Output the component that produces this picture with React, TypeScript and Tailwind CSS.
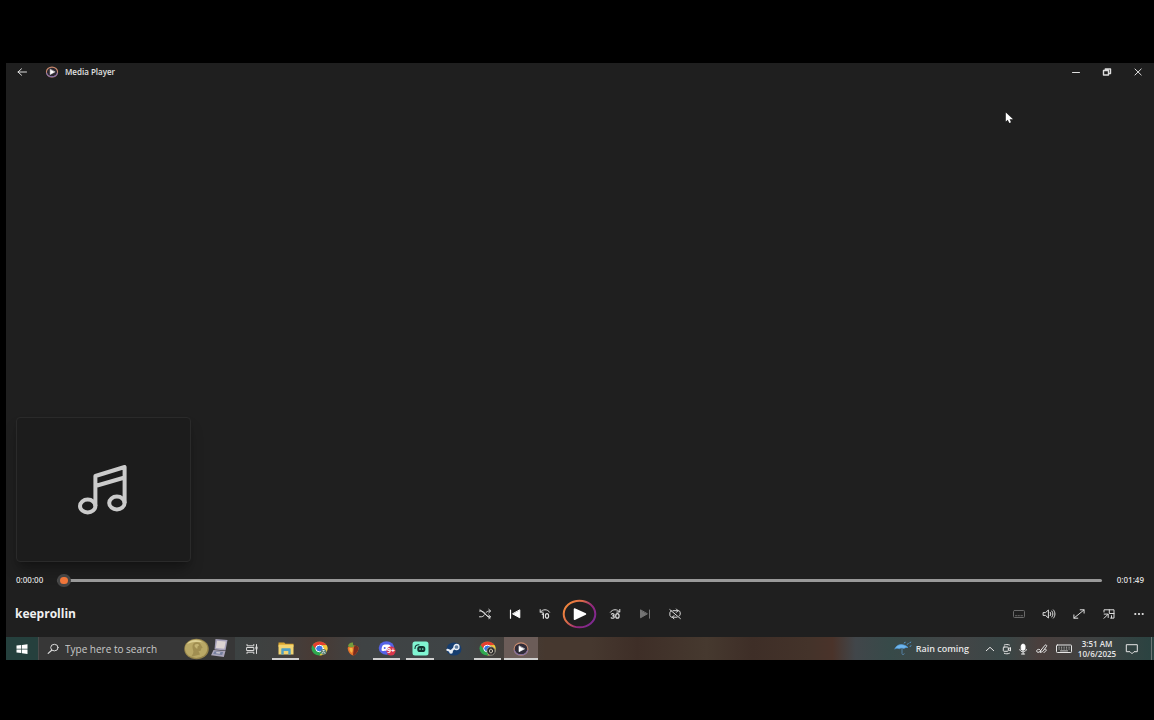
import { useState } from "react"
import type { ReactNode } from "react"

interface IconProps {
  w: number
  h: number
  className?: string
  children: ReactNode
}

function Icon({ w, h, className, children }: IconProps) {
  return (
    <svg
      width={w}
      height={h}
      viewBox={`0 0 ${w} ${h}`}
      fill="none"
      stroke="currentColor"
      strokeWidth="1"
      strokeLinecap="round"
      strokeLinejoin="round"
      className={className}
      aria-hidden="true"
    >
      {children}
    </svg>
  )
}

function PlayerLogo({ className }: { className?: string }) {
  return (
    <Icon w={14} h={12} className={className}>
      <ellipse cx="7" cy="6" rx="5.6" ry="4.9" fill="#2b2731" stroke="#c98a6c" strokeWidth="1.1" />
      <path d="M1.6 7.2A5.6 4.9 0 0 0 12.4 7.2" stroke="#7f6cab" strokeWidth="1.1" />
      <path d="M5.2 3.5v5l4.6-2.5z" fill="#fff" stroke="#fff" strokeWidth="0.5" />
    </Icon>
  )
}

function ChromeLogo() {
  return (
    <>
      <ellipse cx="8.5" cy="7.5" rx="8" ry="7" fill="#2fa84f" stroke="none" />
      <path d="M1.6 4A8 7 0 0 1 15.5 4L8.5 4.4 5 8.8z" fill="#e5402f" stroke="none" />
      <path d="M15.5 4A8 7 0 0 1 8.5 14.5L12 9.2 11 4.2z" fill="#f8c63a" stroke="none" />
      <ellipse cx="8.5" cy="7.5" rx="3.8" ry="3.3" fill="#3978e6" stroke="#fff" strokeWidth="1" />
    </>
  )
}

const transportLeft = [
  {
    label: "Shuffle",
    icon: (
      <Icon w={14} h={12}>
        <path d="M1.5 3h1.8c3.6 0 4.4 5.8 8 5.8h1M1.5 8.8h1.8c1.4 0 2.4-.9 3.2-2M8 4.6C9 3.7 9.8 3 11.2 3h1M10.8 1.3 12.6 3l-1.8 1.7M10.8 7.1l1.8 1.7-1.8 1.7M2 1.8l10 8.6" />
      </Icon>
    ),
  },
  {
    label: "Previous",
    icon: (
      <Icon w={14} h={12}>
        <path d="M2.5 2v8.2" stroke="#fff" strokeWidth="1.2" />
        <path d="M11.8 2.2v7.6L4.9 6z" fill="#fff" stroke="#fff" />
      </Icon>
    ),
  },
  {
    label: "Skip back 10 seconds",
    icon: (
      <Icon w={14} h={12}>
        <path d="M2.2 1.6v2.6h3M2.5 4C4.5 1 9.5.8 11.6 4.2" />
        <path d="M4.2 6.3l1.2-.7v4.6" strokeWidth="1.2" />
        <ellipse cx="9" cy="7.9" rx="1.6" ry="2.2" strokeWidth="1.2" />
      </Icon>
    ),
  },
]

const transportRight = [
  {
    label: "Skip forward 30 seconds",
    icon: (
      <Icon w={14} h={12}>
        <path d="M11.8 1.4V4h-3M11.5 3.8C9.5 1 4.5.8 2.4 4.2" />
        <path d="M3.4 6.1c1-.8 2.7-.4 2.7.7 0 .8-.8 1-1.4 1 .8 0 1.6.3 1.6 1.2 0 1.3-2 1.6-3.1.8" strokeWidth="1.2" />
        <ellipse cx="9.4" cy="7.9" rx="1.7" ry="2.3" strokeWidth="1.2" />
      </Icon>
    ),
  },
  {
    label: "Next",
    icon: (
      <Icon w={14} h={12} className="text-[#747474]">
        <path d="M11.5 2v8.2" />
        <path d="M2.5 2.2v7.6L9.1 6z" fill="currentColor" />
      </Icon>
    ),
  },
  {
    label: "Repeat off",
    icon: (
      <Icon w={14} h={12}>
        <path d="M5 2.7h5.2c1.3 0 2 .9 2 2V6c0 1-.4 1.7-1.1 2M9 9.2H4.4c-1.5 0-2.5-.8-2.5-2V5c0-1 .5-1.8 1.4-2.1M8.4 1 10 2.7 8.4 4.4M6 7.5 4.3 9.2 6 10.9M1.8 1.6l10.6 9" />
      </Icon>
    ),
  },
]

const viewControls = [
  {
    label: "Subtitles",
    icon: (
      <Icon w={14} h={12} className="text-[#6a6a6a]">
        <rect x="1.5" y="2.5" width="11" height="7" rx="1" />
        <path d="M3.5 7.7h1.6M6.4 7.7h1M8.9 7.7h1.6" />
      </Icon>
    ),
  },
  {
    label: "Volume",
    icon: (
      <Icon w={14} h={12}>
        <path d="M1.5 4.6h2L6.4 2v8L3.5 7.4h-2zM8.2 4.3c.8 1 .8 2.4 0 3.4M9.8 3c1.5 1.8 1.5 4.2 0 6M11.4 1.9c2.1 2.3 2.1 5.9 0 8.2" />
      </Icon>
    ),
  },
  {
    label: "Full screen",
    icon: (
      <Icon w={14} h={12}>
        <path d="M8.2 1.8h3.9v3.3M12 1.9 2 10.1M1.9 6.9v3.3h3.9" />
      </Icon>
    ),
  },
  {
    label: "Mini player",
    icon: (
      <Icon w={14} h={12}>
        <path d="M2 4V1.8h10v8.3H8.6M7.3 1.8v3.7H12M2.2 6.1h4v3.4M6 6.3l-4 4M9.5 7.7v2.2" />
      </Icon>
    ),
  },
  {
    label: "More options",
    icon: (
      <Icon w={14} h={12}>
        <g fill="#e8e8e8" stroke="none">
          <circle cx="3.3" cy="6" r="1.1" />
          <circle cx="7" cy="6" r="1.1" />
          <circle cx="10.7" cy="6" r="1.1" />
        </g>
      </Icon>
    ),
  },
]

const taskbarApps = [
  {
    label: "Task View",
    open: false,
    active: false,
    icon: (
      <Icon w={14} h={12}>
        <path d="M2 1.5v1.3h6.8V1.5M2 10.5V9.2h6.8v1.3M2 4.5h6.8v3H2zM11.5 1.5v9" />
        <path d="M11.5 4.2v1.6" strokeWidth="2" />
      </Icon>
    ),
  },
  {
    label: "File Explorer",
    open: true,
    active: false,
    icon: (
      <Icon w={16} h={13}>
        <g stroke="none">
          <path d="M.5.5h5.7l1.2 1.2h8.1V5H.5z" fill="#d9a52f" />
          <path d="M.5 2.7h15v9.8H.5z" fill="#f3d572" />
          <path d="M3.300 7.200c0-.6.4-1 1-1h7.400c.6 0 1 .4 1 1v5.300h-2.400V9H5.700v3.500H3.300z" fill="#4f9fc4" />
        </g>
      </Icon>
    ),
  },
  {
    label: "Google Chrome",
    open: false,
    active: false,
    icon: (
      <Icon w={17} h={15}>
        <ChromeLogo />
        <circle cx="12.5" cy="10.8" r="2.9" fill="#5d7f73" stroke="none" />
        <path d="M11 12.3c.7-2 2.6-2 3 0M12 9.5h1.2" stroke="#d8e5df" />
      </Icon>
    ),
  },
  {
    label: "FL Studio",
    open: false,
    active: false,
    icon: (
      <Icon w={12} h={14}>
        <g stroke="none">
          <path d="M.8 5.5C2 3 9.500 2.600 11.300 5c1 3-2.300 8-5.300 8.600C3 12.600.3 8.700.8 5.500z" fill="#e9752b" />
          <path d="M7 3.800c2.400-.3 4 .4 4.400 1.700.4 3-2.400 7.300-5.400 8.100z" fill="#7a2c1f" />
          <path d="M2.300 6.300c1-.9 2.800-.8 3.300.2.300 2-.3 4-1 4.300-1.300-.9-2.300-2.800-2.300-4.500z" fill="#f8b445" />
          <path d="M1 4.300C1.200 2 3.500.3 6 .6c0 1.700 0 2.900 1.800 4C5.300 5.600 3 5.700 1 4.300z" fill="#739c3c" />
        </g>
      </Icon>
    ),
  },
  {
    label: "Discord",
    open: true,
    active: false,
    icon: (
      <Icon w={18} h={15}>
        <ellipse cx="8.5" cy="7" rx="7.8" ry="6.7" fill="#5563e8" stroke="none" />
        <path d="M3.600 9.600C3.400 7 4.100 4.700 5.300 3.900c1.800-.5 4.600-.5 6.400 0 1.100.8 1.800 3.100 1.600 5.700-1.200.6-2 .7-2.400.2H6.400c-.4.5-1.600.4-2.800-.2z" fill="#fff" stroke="none" />
        <ellipse cx="6.7" cy="7" rx="1" ry="1.1" fill="#5563e8" stroke="none" />
        <circle cx="13" cy="10" r="4.500" fill="#d8364b" stroke="none" />
        <text x="13" y="12.4" textAnchor="middle" fill="#fff" stroke="none" fontSize="7" fontWeight="700">
          9+
        </text>
      </Icon>
    ),
  },
  {
    label: "Streamlabs",
    open: true,
    active: false,
    icon: (
      <Icon w={17} h={15}>
        <rect x="0.5" y="0.5" width="16" height="14" rx="2.5" fill="#80f5d2" stroke="none" />
        <rect x="5.3" y="5" width="8" height="6" rx="2.6" fill="#12332f" stroke="none" />
        <path d="M3 7.5C3 5 4.4 3.7 7 3.7" stroke="#12332f" strokeWidth="1.1" />
        <path d="M8 7.6v1M10.8 7.6v1" stroke="#80f5d2" />
      </Icon>
    ),
  },
  {
    label: "Steam",
    open: false,
    active: false,
    icon: (
      <Icon w={16} h={14}>
        <ellipse cx="8" cy="7" rx="7.5" ry="6.6" fill="#173e70" stroke="none" />
        <path d="M1.4 7.800 5 9.300l3.600-3.500" stroke="#e9eef5" strokeWidth="2.2" />
        <circle cx="5" cy="9.8" r="1.9" fill="#e9eef5" stroke="none" />
        <circle cx="10.5" cy="5" r="2.5" fill="#5f7d9f" stroke="#e9eef5" strokeWidth="1.3" />
      </Icon>
    ),
  },
  {
    label: "Google Chrome profile",
    open: true,
    active: false,
    icon: (
      <Icon w={17} h={15}>
        <ChromeLogo />
        <circle cx="12" cy="10" r="4.2" fill="#262626" stroke="#aaa59c" strokeWidth="0.8" />
        <ellipse cx="12" cy="10" rx="1.5" ry="2" stroke="#ddd4c5" strokeWidth="0.9" />
      </Icon>
    ),
  },
  {
    label: "Media Player",
    open: true,
    active: true,
    icon: (
      <Icon w={16} h={14}>
        <ellipse cx="8" cy="7" rx="6.9" ry="6.1" fill="#2f2b38" stroke="#c88b6e" strokeWidth="1.1" />
        <path d="M1.4 8.500a6.900 6.100 0 0 0 13.200 0" stroke="#8270a0" strokeWidth="1.1" />
        <path d="M6 4.200v5.600L11.300 7z" fill="#fff" stroke="#fff" strokeWidth="0.6" />
      </Icon>
    ),
  },
]

function ControlButton({ label, children }: { label: string; children: ReactNode }) {
  return (
    <button type="button" aria-label={label} className="flex h-7 w-[30px] items-center justify-center rounded hover:bg-white/10">
      {children}
    </button>
  )
}

function TitleBar() {
  return (
    <header className="flex h-[18px] items-center">
      <button type="button" aria-label="Back" className="flex h-full w-8 items-center justify-center hover:bg-white/10">
        <Icon w={12} h={10}>
          <path d="M2 5h8.5M5.5 1.8 2 5l3.5 3.2" />
        </Icon>
      </button>
      <PlayerLogo className="ml-[7px]" />
      <h1 className="ml-1.5 flex-1 text-[8px] leading-3 font-semibold text-[#e2e2e2]">Media Player</h1>
      <div className="flex h-full">
        <button type="button" aria-label="Minimize" className="flex w-[31px] items-center justify-center hover:bg-white/10">
          <Icon w={12} h={10}>
            <path d="M2.5 5.5h7" />
          </Icon>
        </button>
        <button type="button" aria-label="Restore" className="flex w-[31px] items-center justify-center hover:bg-white/10">
          <Icon w={12} h={10}>
            <path d="M2.5 3.5h5v4.500h-5zM4.300 3.300V2h5.200v4.500H7.800" strokeWidth="1.4" />
          </Icon>
        </button>
        <button type="button" aria-label="Close" className="flex w-8 items-center justify-center hover:bg-white/10">
          <Icon w={12} h={10}>
            <path d="M3 2l6.200 6M9.200 2 3 8" />
          </Icon>
        </button>
      </div>
    </header>
  )
}

function SeekBar() {
  const [position, setPosition] = useState(0)

  return (
    <div className="flex h-5 items-center px-2.5 text-[8px] leading-3 font-semibold text-[#dedede]">
      <span className="w-[41px]">0:00:00</span>
      <input
        type="range"
        aria-label="Seek"
        min={0}
        max={109}
        value={position}
        onChange={(e) => setPosition(Number(e.target.value))}
        className="h-3 min-w-0 flex-1 appearance-none bg-transparent [&::-webkit-slider-runnable-track]:h-[3px] [&::-webkit-slider-runnable-track]:rounded-full [&::-webkit-slider-runnable-track]:bg-[#999999] [&::-webkit-slider-thumb]:-mt-[5px] [&::-webkit-slider-thumb]:h-[13px] [&::-webkit-slider-thumb]:w-3.5 [&::-webkit-slider-thumb]:appearance-none [&::-webkit-slider-thumb]:rounded-full [&::-webkit-slider-thumb]:border-3 [&::-webkit-slider-thumb]:border-[#454545] [&::-webkit-slider-thumb]:bg-[#f0763a]"
      />
      <span className="w-[42px] text-right">0:01:49</span>
    </div>
  )
}

function Controls() {
  return (
    <div className="mt-[7px] mb-1.5 grid h-[34px] grid-cols-[1fr_auto_1fr] items-center text-[#dedede]">
      <h2 className="pl-[9px] text-xs font-bold text-[#f0f0f0]">keeprollin</h2>
      <div className="flex items-center">
        {transportLeft.map((c) => (
          <ControlButton key={c.label} label={c.label}>{c.icon}</ControlButton>
        ))}
        <button type="button" aria-label="Play" className="flex w-10 items-center justify-center">
          <svg width="36" height="30" viewBox="0 0 36 30" fill="none" aria-hidden="true">
            <defs>
              <linearGradient id="ring" x1="0" y1="0.2" x2="1" y2="0.8">
                <stop offset="0" stopColor="#f38a3c" />
                <stop offset="0.35" stopColor="#dc6a48" />
                <stop offset="0.65" stopColor="#93277e" />
                <stop offset="1" stopColor="#7b2a94" />
              </linearGradient>
            </defs>
            <ellipse cx="17.5" cy="15" rx="15.8" ry="13.3" stroke="url(#ring)" strokeWidth="2" />
            <path d="M12.5 10v10.200L23.5 15z" fill="#fff" stroke="#fff" strokeWidth="1.5" strokeLinejoin="round" />
          </svg>
        </button>
        {transportRight.map((c) => (
          <ControlButton key={c.label} label={c.label}>{c.icon}</ControlButton>
        ))}
      </div>
      <div className="flex justify-end">
        {viewControls.map((c) => (
          <ControlButton key={c.label} label={c.label}>{c.icon}</ControlButton>
        ))}
      </div>
    </div>
  )
}

function SearchBox() {
  return (
    <label className="flex w-[197px] items-center border-l border-[#4b4b4b] bg-[#373737] pl-2">
      <Icon w={12} h={12} className="shrink-0 text-[#dcdcdc]">
        <ellipse cx="7.4" cy="4.6" rx="3.7" ry="3.3" />
        <path d="M4.7 7.2 1.2 10.4" strokeWidth="1.2" />
      </Icon>
      <input
        type="text"
        aria-label="Search"
        placeholder="Type here to search"
        className="ml-1.5 min-w-0 flex-1 bg-transparent text-[10px] leading-4 text-white outline-none placeholder:text-[#c9c9c9]"
      />
      <svg width="46" height="22" viewBox="0 0 46 22" className="mr-1.5 shrink-0" aria-hidden="true">
        <ellipse cx="13.5" cy="11" rx="12.3" ry="10.3" fill="#94834a" />
        <ellipse cx="13.2" cy="10.6" rx="11.2" ry="9.3" fill="#b9a866" />
        <path d="M4 6C7 1.500 15 .5 20 4.500 16 3.500 8 3.500 4 6z" fill="#ddd093" />
        <path d="M10.500 5.500c3-2.500 7-1.300 7.500 1.500l1.700 2.700-1.500.7c0 2-.7 2.800-2.700 2.600l1.500 3.500-9 2.300c2-2.500 3-4.500 2-7-.8-2.300-.7-4.800.5-6.300z" fill="#a08e51" />
        <path d="M12 6.500c1.800-1 3.600-.6 4.200.8l-1.600 1.200-.4 2.500-1.700-1.500c-1.200-.8-1.200-2.200-.5-3z" fill="#c4b473" />
        <path d="m32.500 1 12 1-2 10.500-11-1z" fill="#a5a0b8" />
        <path d="m34 2.800 8.800.7-1.500 7.200-8.500-.8z" fill="#dbd3d1" />
        <path d="m30.500 12 12 .9-1.700 6.100-12.800-1.700z" fill="#aaa5ba" />
        <path d="m31.600 13.300 8.500.7-.9 2.900-9-1z" fill="#76809f" />
        <path d="m33.500 13.900 4 .3-.8 1.500-3.800-.4z" fill="#cfc9cf" />
      </svg>
    </label>
  )
}

function SystemTray() {
  return (
    <div className="flex text-[#e6e6e6]">
      <button type="button" className="mr-3 flex items-center text-[9px] font-semibold">
        <Icon w={18} h={15} className="mr-1">
          <path d="M1 7.800C2 3.500 9 1.500 14 6.500c-1.500-.2-3 .1-4 1-1.700-.8-3.300-.7-4.800.3C4 7.200 2.400 7.100 1 7.800z" fill="#6fb6ec" stroke="#4f9adb" strokeWidth="0.6" />
          <path d="M8 7.500v5.200c.2 1.300 1.900 1.300 2.200.1" stroke="#5682a5" />
          <path d="M10.500 2l.6-.8M13.500 3.300l.6-.8M16 1.800l.5-.7M16.200 5.500l.6-.8" stroke="#5aa7e5" />
        </Icon>
        Rain coming
      </button>
      <button type="button" aria-label="Show hidden icons" className="flex w-[18px] items-center justify-center">
        <Icon w={12} h={10}>
          <path d="M2.300 6.700 6 3.300l3.700 3.400" />
        </Icon>
      </button>
      <button type="button" aria-label="Meet Now" className="flex w-4 items-center justify-center">
        <Icon w={12} h={12}>
          <rect x="2.3" y="4" width="5" height="4.3" rx="0.8" />
          <path d="m7.500 5.700 2-1.200v3.400l-2-1.200M3.300 2c1.500-.7 3.600-.7 5.100 0M3.300 10.300c1.500.7 3.600.7 5.100 0" />
        </Icon>
      </button>
      <button type="button" aria-label="Microphone" className="flex w-4 items-center justify-center">
        <Icon w={12} h={12}>
          <rect x="4.2" y="1.3" width="3.8" height="6" rx="1.7" fill="#fff" stroke="#fff" />
          <path d="M2.800 6.500c.3 3.200 6.300 3.200 6.600 0M6.100 9v2M4.500 11h3.200" />
        </Icon>
      </button>
      <button type="button" aria-label="Pen menu" className="flex w-[22px] items-center justify-center">
        <Icon w={14} h={12}>
          <path d="M4.600 6.500C2.800 5.800 1.500 7 1.700 8.200c.2 1.500 2.200 1.400 3.200.3L10 2.200c.7-.9 2.300.2 1.600 1.200L7.500 8.600l-2.300.9.500-2M9.800 6.300c1.600-.4 2 .8 1.200 1.600-.8.700-2 .700-2 1.700" />
        </Icon>
      </button>
      <button type="button" aria-label="Touch keyboard" className="flex w-[22px] items-center justify-center">
        <Icon w={18} h={12}>
          <rect x="1.5" y="2" width="15" height="7.5" rx="0.8" fill="#3d3d3c" />
          <path d="M4 4.200h.2M6.500 4.200h.2M9 4.200h.2M11.500 4.200h.2M14 4.200h.2M4 6h.2M6.500 6h.2M9 6h.2M11.500 6h.2M14 6h.2M5.500 7.900h7" strokeWidth="0.8" />
        </Icon>
      </button>
      <button type="button" className="flex w-11 flex-col items-center justify-center text-[8px] leading-[10px] font-semibold">
        <span>3:51 AM</span>
        <span>10/6/2025</span>
      </button>
      <button type="button" aria-label="Notifications" className="flex w-[26px] items-center justify-center">
        <Icon w={14} h={12}>
          <path d="M1.700 1.700h10.600v7H9L7 10.700l-2-2H1.700z" />
        </Icon>
      </button>
      <button type="button" aria-label="Show desktop" className="ml-1.5 w-[3px] border-l border-[#6b7675]" />
    </div>
  )
}

function Taskbar() {
  return (
    <footer className="flex h-[23px] bg-[linear-gradient(90deg,#25403d_0%,#3c4242_20%,#40403f_24%,#493a34_27%,#3f4344_31%,#3f4446_40%,#46382f_47%,#46382f_51%,#3e2e27_55%,#46392f_61%,#3e2e27_65%,#44332a_70%,#4a332a_72%,#41464a_74%,#374a49_77%,#434546_83%,#394747_87%,#4a3f3d_90%,#3e4242_95%,#2a4341_100%)]">
      <button type="button" aria-label="Start" className="flex w-8 items-center justify-center bg-[#25403d]">
        <Icon w={12} h={12}>
          <path d="M.5 2.600 5.300 2v3.700H.5zM6 1.900l5.500-.7v4.500H6zM.5 6.400h4.800v3.700L.5 9.500zM6 6.400h5.500v4.500L6 10.200z" fill="#fff" stroke="none" />
        </Icon>
      </button>
      <SearchBox />
      <nav aria-label="Pinned apps" className="flex w-[303px] text-[#dcdcdc]">
        {taskbarApps.map((app) => (
          <button
            key={app.label}
            type="button"
            aria-label={app.label}
            className={`relative flex flex-1 items-center justify-center hover:bg-white/10 ${app.active ? "bg-[#6b5c58]" : ""}`}
          >
            {app.icon}
            {app.open && (
              <span className={`absolute bottom-0 h-0.5 bg-[#cfcfcf] ${app.active ? "inset-x-0" : "inset-x-[3px]"}`} />
            )}
          </button>
        ))}
      </nav>
      <div className="flex-1" />
      <SystemTray />
    </footer>
  )
}

export default function App() {
  return (
    <div className="flex min-h-screen flex-col bg-black pt-[63px] pb-[60px] pl-1.5 font-['Open_Sans',sans-serif]">
      <main className="relative flex flex-1 flex-col bg-[#1f1f1f] text-[#dedede]">
        <TitleBar />
        <section aria-label="Now playing" className="flex flex-1 items-end px-2.5 pb-2">
          <div className="flex h-[145px] w-[175px] items-center justify-center rounded border border-[#2a2a2a] bg-[#1c1c1c] shadow-lg shadow-black/30">
            <svg width="52" height="52" viewBox="0 0 52 52" fill="none" stroke="#cbcbcb" strokeWidth="4" strokeLinejoin="round" aria-hidden="true">
              <ellipse cx="9.7" cy="42" rx="7.7" ry="6.5" />
              <ellipse cx="38.9" cy="39" rx="7.7" ry="6.5" />
              <path d="M17.4 42V12L46.6 3v36M17.4 22 46.6 13.5" />
            </svg>
          </div>
        </section>
        <SeekBar />
        <Controls />
        {/* Mouse pointer */}
        <svg width="9" height="12" viewBox="0 0 9 12" className="absolute top-[49px] right-[140px]" aria-hidden="true">
          <path d="M.8.5v9l2-1.700 1.500 3.200 1.700-.8-1.400-3H8z" fill="#fff" />
        </svg>
      </main>
      <Taskbar />
    </div>
  )
}
